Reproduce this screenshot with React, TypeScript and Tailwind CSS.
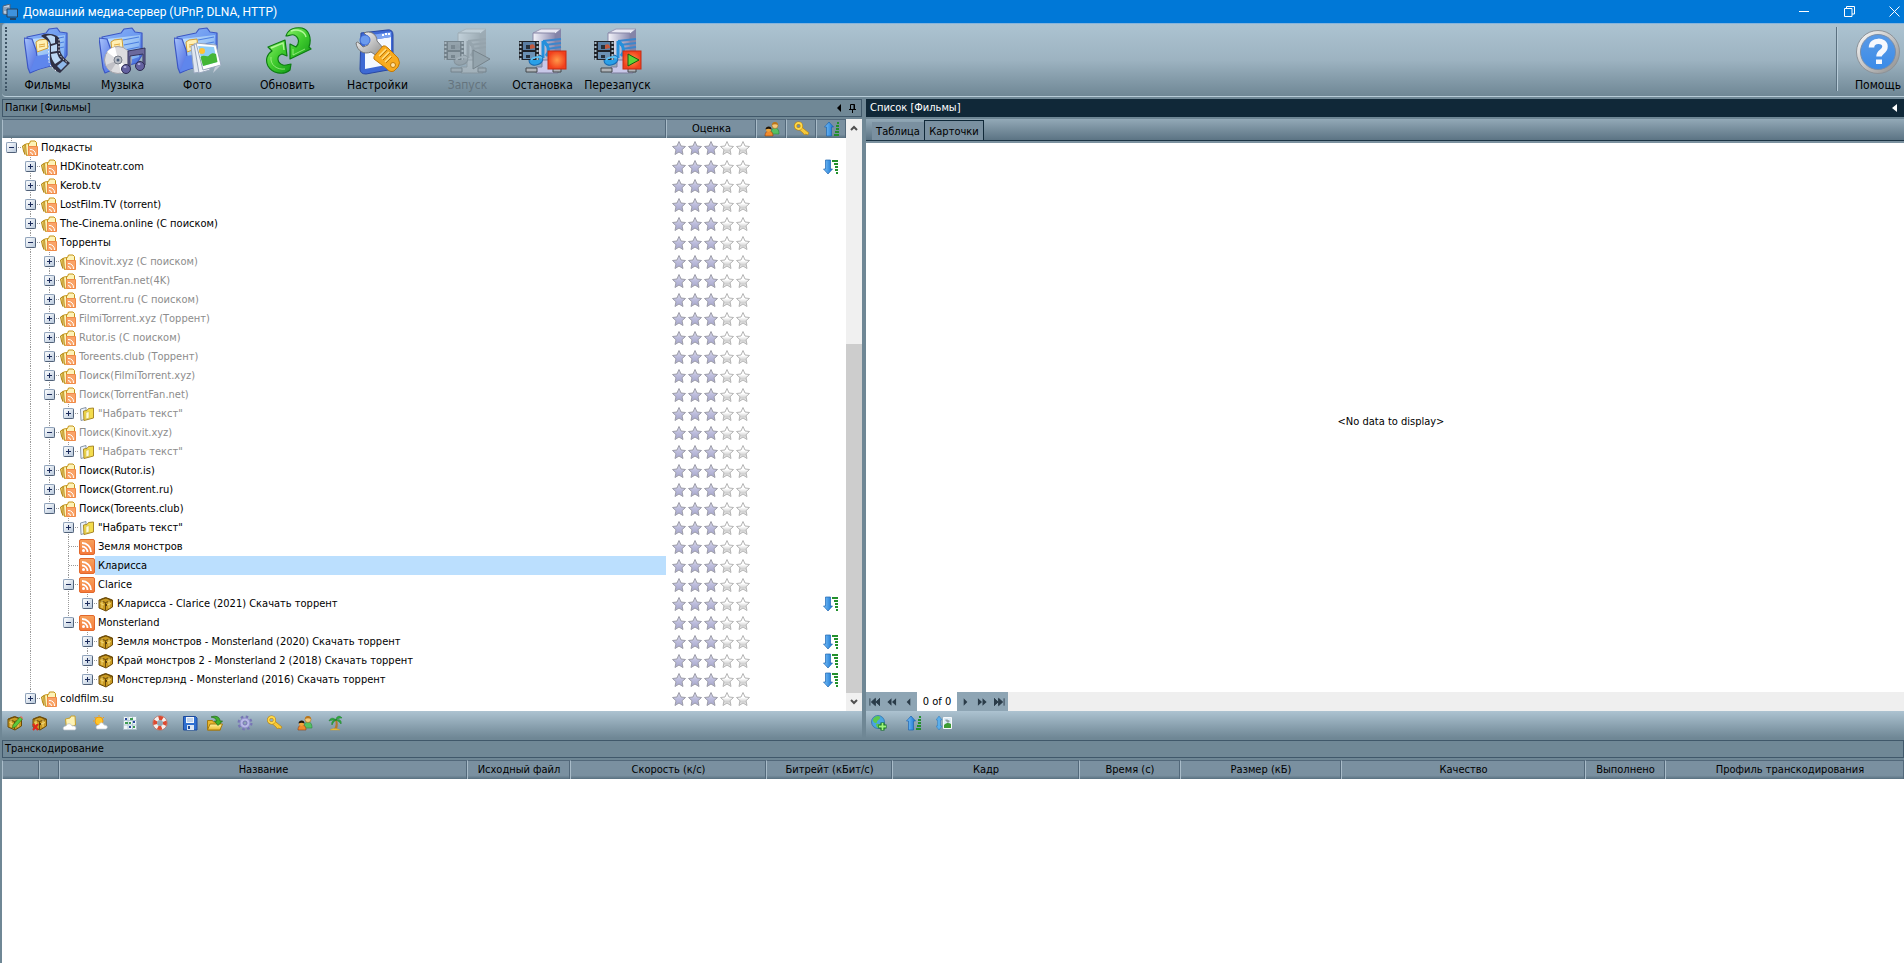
import React from "react";
import clsx from "clsx";

type IconName = "folder" | "pages" | "rss" | "chest";

type Node = {
  depth: number;
  label: string;
  icon?: IconName;
  expander?: "+" | "-";
  muted?: boolean;
  selected?: boolean;
  sorted?: boolean;
};

const nodes: Node[] = [
  { depth: 0, label: "Подкасты", expander: "-" },
  { depth: 1, label: "HDKinoteatr.com", expander: "+", sorted: true },
  { depth: 1, label: "Kerob.tv", expander: "+" },
  { depth: 1, label: "LostFilm.TV (torrent)", expander: "+" },
  { depth: 1, label: "The-Cinema.online (С поиском)", expander: "+" },
  { depth: 1, label: "Торренты", expander: "-" },
  { depth: 2, label: "Kinovit.xyz (С поиском)", expander: "+", muted: true },
  { depth: 2, label: "TorrentFan.net(4K)", expander: "+", muted: true },
  { depth: 2, label: "Gtorrent.ru (С поиском)", expander: "+", muted: true },
  { depth: 2, label: "FilmiTorrent.xyz (Торрент)", expander: "+", muted: true },
  { depth: 2, label: "Rutor.is (С поиском)", expander: "+", muted: true },
  { depth: 2, label: "Toreents.club (Торрент)", expander: "+", muted: true },
  { depth: 2, label: "Поиск(FilmiTorrent.xyz)", expander: "+", muted: true },
  { depth: 2, label: "Поиск(TorrentFan.net)", expander: "-", muted: true },
  { depth: 3, label: '"Набрать текст"', icon: "pages", expander: "+", muted: true },
  { depth: 2, label: "Поиск(Kinovit.xyz)", expander: "-", muted: true },
  { depth: 3, label: '"Набрать текст"', icon: "pages", expander: "+", muted: true },
  { depth: 2, label: "Поиск(Rutor.is)", expander: "+" },
  { depth: 2, label: "Поиск(Gtorrent.ru)", expander: "+" },
  { depth: 2, label: "Поиск(Toreents.club)", expander: "-" },
  { depth: 3, label: '"Набрать текст"', icon: "pages", expander: "+" },
  { depth: 3, label: "Земля монстров", icon: "rss" },
  { depth: 3, label: "Кларисса", icon: "rss", selected: true },
  { depth: 3, label: "Clarice", icon: "rss", expander: "-" },
  { depth: 4, label: "Кларисса - Clarice (2021) Скачать торрент", icon: "chest", expander: "+", sorted: true },
  { depth: 3, label: "Monsterland", icon: "rss", expander: "-" },
  { depth: 4, label: "Земля монстров - Monsterland (2020) Скачать торрент", icon: "chest", expander: "+", sorted: true },
  { depth: 4, label: "Край монстров 2 - Monsterland 2 (2018) Скачать торрент", icon: "chest", expander: "+", sorted: true },
  { depth: 4, label: "Монстерлэнд - Monsterland (2016) Скачать торрент", icon: "chest", expander: "+", sorted: true },
  { depth: 1, label: "coldfilm.su", expander: "+" },
];

// true when a later sibling exists at this depth
const hasNext = (idx: number, depth: number): boolean => {
  const next = nodes.slice(idx + 1).find((node) => node.depth <= depth);
  return next?.depth === depth;
};

const Gradients: React.FC = () => (
  <svg width="0" height="0" className="absolute" aria-hidden="true">
    <defs>
      <linearGradient id="star" x1="0" y1="0" x2="0" y2="1">
        <stop offset="0" stopColor="#dcdcec" />
        <stop offset="0.5" stopColor="#bcbcdc" />
        <stop offset="1" stopColor="#a6a6cc" />
      </linearGradient>
      <linearGradient id="starOff" x1="0" y1="0" x2="0" y2="1">
        <stop offset="0.4" stopColor="#ffffff" />
        <stop offset="0.7" stopColor="#d2d2d2" />
        <stop offset="1" stopColor="#f4f4f4" />
      </linearGradient>
      <linearGradient id="blueFolder" x1="0" y1="0" x2="1" y2="1">
        <stop offset="0" stopColor="#8fb6f8" />
        <stop offset="0.5" stopColor="#6d9bf0" />
        <stop offset="1" stopColor="#3f63d6" />
      </linearGradient>
      <linearGradient id="blueInner" x1="0" y1="0" x2="1" y2="1">
        <stop offset="0" stopColor="#c4e2fc" />
        <stop offset="1" stopColor="#6fa4f0" />
      </linearGradient>
      <linearGradient id="blueFront" x1="0" y1="0" x2="1" y2="1">
        <stop offset="0" stopColor="#a9c4fc" />
        <stop offset="1" stopColor="#3f60dc" />
      </linearGradient>
      <linearGradient id="green" x1="0" y1="0" x2="1" y2="1">
        <stop offset="0" stopColor="#8df06a" />
        <stop offset="0.5" stopColor="#3fcb2d" />
        <stop offset="1" stopColor="#119a17" />
      </linearGradient>
      <linearGradient id="server" x1="0" y1="0" x2="1" y2="0">
        <stop offset="0" stopColor="#f4f4fa" />
        <stop offset="1" stopColor="#8b8bb0" />
      </linearGradient>
      <radialGradient id="red">
        <stop offset="0" stopColor="#ff9a4a" />
        <stop offset="1" stopColor="#f2401c" />
      </radialGradient>
      <linearGradient id="helpBlue" x1="0" y1="0" x2="0" y2="1">
        <stop offset="0" stopColor="#5a9ae6" />
        <stop offset="1" stopColor="#3a8be8" />
      </linearGradient>
      <linearGradient id="silver" x1="0" y1="0" x2="1" y2="1">
        <stop offset="0" stopColor="#ffffff" />
        <stop offset="1" stopColor="#8a8a8a" />
      </linearGradient>
      <linearGradient id="orange" x1="0" y1="0" x2="0" y2="1">
        <stop offset="0" stopColor="#f7a25c" />
        <stop offset="1" stopColor="#f5793a" />
      </linearGradient>
      <linearGradient id="arrowBlue" x1="0" y1="0" x2="1" y2="0">
        <stop offset="0" stopColor="#7cc4fa" />
        <stop offset="1" stopColor="#1672d0" />
      </linearGradient>
      <linearGradient id="gold" x1="0" y1="0" x2="0" y2="1">
        <stop offset="0" stopColor="#fff3a0" />
        <stop offset="1" stopColor="#eab72e" />
      </linearGradient>
    </defs>
  </svg>
);

const Big: React.FC<{ children: React.ReactNode }> = ({ children }) => (
  <svg width="48" height="48" viewBox="0 0 48 48" aria-hidden="true">
    {children}
  </svg>
);

const Small: React.FC<{ children: React.ReactNode }> = ({ children }) => (
  <svg width="16" height="16" viewBox="0 0 16 16" className="shrink-0" aria-hidden="true">
    {children}
  </svg>
);

const BlueFolder: React.FC = () => (
  <g strokeLinejoin="round">
    <path d="M3 10 22 6 25 2 33 1 36 5 43 6 43 28 38 36 8 44Z" fill="url(#blueFolder)" stroke="#3c57c4" strokeWidth="1.2" />
    <path d="M8 12 41 8 40 30 10 40Z" fill="url(#blueInner)" />
    <path d="M24 13 40 10M25 18 40 15M26 23 40 20" stroke="#4c7fe0" strokeWidth="1.2" />
    <path d="m12 15 3-2 8-1 1 9-11 4Z" fill="#fff0b4" stroke="#cf9d34" />
    <path d="m15 18 6-1m-6 3 6-1" stroke="#e0a83c" />
    <path d="M0 11 8 12 12 23 15 42 6 46 4 41Z" fill="url(#blueFront)" stroke="#3c57c4" strokeWidth="1.2" />
    <path d="m6 45 9-3 10-3-1-12-12 2Z" fill="#5f86ec" />
  </g>
);

const MoviesIcon: React.FC = () => (
  <Big>
    <BlueFolder />
    <path d="M17 9c3-3 10-3 16 0 4 3 3 8 3 13 0 5 4 9 10 14l-10 10c-7-3-10-8-10-14V18c0-4-4-5-9-9Z" fill="#2f3044" />
    <path d="M22 9c3-1 6-1 9 1v6l-4 1c-1-4-3-6-5-8ZM27 19l6-2v7l-6 1ZM27 27l6-1c1 3 2 5 4 7l-6 4c-2-3-4-6-4-10Z" fill="#bcd8f4" />
    <path d="m33 39 6-5 4 3-6 6Z" fill="#8fb8ea" />
    <path d="M24.500 17v14c0 6 3 10 8 13M35 12v12c0 5 4 8 9 12" stroke="#eeeef6" strokeDasharray="1.500 2" fill="none" />
  </Big>
);

const MusicIcon: React.FC = () => (
  <Big>
    <BlueFolder />
    <circle cx="19" cy="33" r="13.500" fill="#dcdcdf" stroke="#a5a5ab" />
    <path d="M19 33 8 25a13 13 0 0 1 8-5ZM19 33l11 8a13 13 0 0 1-8 5Z" fill="#fff" />
    <path d="m19 33-12 5a13 13 0 0 0 5 6Z" fill="#c0c0c6" />
    <circle cx="19" cy="33" r="4" fill="#b8bcc4" stroke="#777d88" />
    <circle cx="19" cy="33" r="1.500" fill="#4d5f7a" />
    <path d="M29 24 46 21V38H44V27L31 29V42H29Z" fill="#6b699c" stroke="#35345c" />
    <ellipse cx="27" cy="42" rx="4.500" ry="4.500" fill="#6361a0" stroke="#2d2c50" />
    <ellipse cx="41" cy="39" rx="4.500" ry="4.500" fill="#6361a0" stroke="#2d2c50" />
    <ellipse cx="26" cy="40" rx="1.500" ry="1" fill="#b9b8e2" />
    <ellipse cx="40" cy="37" rx="1.500" ry="1" fill="#b9b8e2" />
  </Big>
);

const PhotoIcon: React.FC = () => (
  <Big>
    <BlueFolder />
    <path d="M17 19 23 17 27 45 20 46Z" fill="#dfe6f0" stroke="#98a6bc" />
    <path d="M20 17 32 17 36 43 25 46Z" fill="#eef2f8" stroke="#98a6bc" />
    <path d="M22 16 42 18 47 38 29 43Z" fill="#fff" stroke="#98a6bc" />
    <path d="M24 19 40 20 43 35 29 39Z" fill="#8fcdf6" />
    <path d="M26.500 30c4-3 7 1 9-2 2-2 4-2 6.500-1l1.500 8L29 39Z" fill="#44b636" />
    <circle cx="28" cy="24" r="3" fill="#ffc233" />
    <path d="M39 46 47 38 41 40Z" fill="#c4ccd8" />
  </Big>
);

const RefreshIcon: React.FC = () => (
  <Big>
    <g stroke="#0d7d12" strokeWidth="1.200" strokeLinejoin="round">
      <path d="M4 20 21 13 23 29 18 27C12 29 13 36 19 38 22 39 25 37 27 37L26 43C19 49 8 46 4 39 1 33 3 27 8 24Z" fill="url(#green)" />
      <path d="M22 9C24 2 31 0 38 1 45 3 48 11 45 20L47 22 26 32 26 17 32 20C36 16 35 10 30 8 27 7 25 9 22 9Z" fill="url(#green)" />
    </g>
    <path d="M7 21 19 16 20 23M27 4C34 1 41 5 42 10" stroke="#c8ffae" strokeWidth="1.400" fill="none" opacity="0.800" />
    <path d="M7 30C6 38 13 43 21 42M29 22 29 28 41 22" stroke="#b6f89a" fill="none" opacity="0.700" />
  </Big>
);

const SettingsIcon: React.FC = () => (
  <Big>
    <path d="M7 6 33 3Q39 2 39 8V39Q39 42 34 43L12 47Q6 47 6 42Z" fill="#3e69d4" stroke="#2847a4" />
    <path d="M11 14 37 10V37L11 42Z" fill="#f4f8ff" />
    <path d="M11 9 37 5V10L11 14Z" fill="#7da4f2" />
    <path d="m28 8 2 0m1-1 2 0m1 0 2 0" stroke="#fff" strokeWidth="2" />
    <path d="M2 16Q3 14 5 16L9 20 14 18 15 11 10 6C16 3 23 7 23 14L30 22 23 29 17 25C10 28 3 24 2 16Z" fill="url(#silver)" stroke="#777" />
    <circle cx="11" cy="13" r="5" fill="#6b9bee" stroke="#3e69d4" />
    <path d="M22 27 29 19Q31 18 34 21L44 31Q47 36 44 40L40 44Q36 46 32 41L20 32Q19 30 22 27Z" fill="#f8ab1f" stroke="#c27a08" />
    <path d="m25 29 7-7M28 32l7-7M31 35l6-6" stroke="#ffdf82" strokeWidth="1.500" />
    <path d="m26 30 7-7M29 33l7-7M32 36l6-6" stroke="#b8770c" />
    <circle cx="39" cy="38" r="2.500" fill="#ffe2a2" stroke="#c27a08" />
  </Big>
);

const ServerBase: React.FC = () => (
  <g>
    <path d="M14 6 22 2H42L36 7Z" fill="#e9e9f4" stroke="#9a9ab6" />
    <path d="M14 6H36V38L14 36Z" fill="url(#server)" stroke="#8888a8" />
    <path d="M36 7 42 2V33L36 38Z" fill="#8484a8" />
    <path d="M24 14 42 12M26 18 42 16M28 22 42 20" stroke="#3c86cc" strokeWidth="2" />
    <path d="M23 33H33V40H39V46H17V40H23Z" fill="#c8c8e8" stroke="#7c7c9c" />
    <path d="M7 41H18V45H7ZM34 41H42V45H34Z" fill="#b0b4b8" stroke="#45484c" />
    <path d="M24 14V31M24 14C30 18 31 25 27 29" stroke="#2490dc" strokeWidth="3" fill="none" />
    <ellipse cx="17" cy="33" rx="7" ry="5" fill="#29a0e8" stroke="#1768b0" transform="rotate(-15 17 33)" />
    <path d="M0 14H20V33H0Z" fill="#1f2228" />
    <path d="M1.500 15V33M18.500 15V33" stroke="#a9bcc8" strokeWidth="2" strokeDasharray="2 2" />
    <path d="M4 15H16V23H4Z" fill="#5a7ea4" />
    <path d="M4 25H16V32H4Z" fill="#6b91b4" />
    <path d="M7 18h4v4H7ZM7 28h4v3H7Z" fill="#26303c" />
    <path d="M11 18c3-2 5 0 5 3l-5 1Z" fill="#c4583c" />
    <path d="M12 33c2-3 8-4 11-2" stroke="#5cc0f4" strokeWidth="2" fill="none" />
  </g>
);

const StartIcon: React.FC = () => (
  <Big>
    <g className="opacity-35 grayscale">
      <ServerBase />
    </g>
    <path d="m29 23 17 9-17 10Z" fill="#93a3ac" stroke="#77848c" />
  </Big>
);

const StopIcon: React.FC = () => (
  <Big>
    <ServerBase />
    <rect x="29" y="24" width="18" height="18" fill="url(#red)" stroke="#c42c14" />
  </Big>
);

const RestartIcon: React.FC = () => (
  <Big>
    <ServerBase />
    <rect x="29" y="24" width="18" height="18" fill="url(#red)" stroke="#c42c14" />
    <path d="m34 27 11 6-11 6Z" fill="#5fd636" stroke="#145c10" />
  </Big>
);

const HelpIcon: React.FC = () => (
  <Big>
    <circle cx="24" cy="25" r="21.500" fill="url(#silver)" stroke="#8c9298" />
    <circle cx="24" cy="25" r="17.500" fill="url(#helpBlue)" stroke="#7a8ea8" />
    <path d="M17.500 20.500C17.500 12.500 31 12.500 31 19.500 31 25 25 24.500 25 29.500" stroke="#f6f8fd" strokeWidth="5.500" fill="none" />
    <path d="M22 32.500h6v4.500h-6Z" fill="#f6f8fd" />
  </Big>
);

const Arrow: React.FC<{ up?: boolean }> = ({ up = false }) => (
  <Small>
    <path
      d={up ? "M5 1 9.500 6H7.500V15H2.500V6H.5Z" : "M5 15 9.500 10H7.500V1H2.500V10H.5Z"}
      fill="url(#arrowBlue)"
      stroke="#1c64b0"
      strokeWidth="0.700"
    />
    <path
      d={up ? "M13 2h2M12 5h3M12 8h3M11 11h4M10 14h5" : "M9 2h6M11 5h4M12 8h3M12 11h3M13 14h2"}
      stroke="#23902c"
      strokeWidth="2"
    />
  </Small>
);

const UsersIcon: React.FC = () => (
  <Small>
    <path d="M7 13c0-5 2-6 4-6s4 1 4 6Z" fill="#55c063" stroke="#2b8a3a" strokeWidth="0.600" />
    <circle cx="11" cy="4.500" r="3" fill="#f5c87a" stroke="#a56f1c" strokeWidth="0.600" />
    <path d="M8 4c0-4 6-4 6 0-2-1-4-1-6 0Z" fill="#b8741a" />
    <path d="M1 15c0-4 2-5 4-5s4 1 4 5Z" fill="#f08a2c" stroke="#8f3f10" strokeWidth="0.600" />
    <circle cx="4.500" cy="8.500" r="2.500" fill="#f0a63c" />
    <path d="M1.500 8.500c0-4 6.500-4 6 0-2-1-4-1-6 0Z" fill="#1d1408" />
  </Small>
);

const KeyIcon: React.FC = () => (
  <Small>
    <path d="M7 5.500 15 12l-1.500 2-2-1-1 1-1.500-2L5 8.500Z" fill="#f6c838" stroke="#b8820f" strokeWidth="0.700" />
    <circle cx="4.500" cy="5" r="3" fill="none" stroke="#b8820f" strokeWidth="3" />
    <circle cx="4.500" cy="5" r="3" fill="none" stroke="#ffd94a" strokeWidth="1.800" />
  </Small>
);

const ChestShape: React.FC = () => (
  <g strokeLinejoin="round">
    <path d="M1 4 7.500 1.500 14.500 4V11L8 15 1 12Z" fill="#c99a22" stroke="#6b4a08" />
    <path d="M1.500 4.500 7.500 6.500 14 4.500M7.500 6.500V14.500M3 3.500 8 2l5 2" stroke="#6b4a08" fill="none" />
    <path d="M2.500 7.500 6 9M9 9l4-1.500M4 4.500V12M11 5V12" stroke="#f3d774" fill="none" />
    <path d="M7 8h2v2H7Z" fill="#5a3e08" />
  </g>
);

const ChestIcon: React.FC = () => (
  <Small>
    <ChestShape />
  </Small>
);

const FolderIcon: React.FC = () => (
  <Small>
    <path d="M.5 6 3 4.500V14.500L1.500 11Z" fill="#f0d870" stroke="#b08414" />
    <path d="M3.500 4 7.500 3.500 8.500 1H13L14.500 2.500V13L4.500 15.500Z" fill="#fdf3b8" stroke="#c49418" />
    <path d="M6.500 3.500V13" stroke="#c49418" />
    <path d="M6.500 6.500h9v9h-9Z" fill="#f9a468" stroke="#f08a48" />
    <path d="M8 9.500a5 5 0 0 1 5.500 5.500M8 12.500a2.500 2.500 0 0 1 2.500 2.500" stroke="#fff" fill="none" />
  </Small>
);

const PagesIcon: React.FC = () => (
  <Small>
    <path d="M1.500 3 7 1.500V13L2 14.500Z" fill="#edf3fa" stroke="#8896a8" />
    <path d="M4.500 5 8 4.500 9.500 2.500 14.500 2V12L5 14.500Z" fill="#f3dc4e" stroke="#a8882a" />
    <path d="M7 6.500l3-1V12L7 13Z" fill="#fffbd8" stroke="#c4ac3c" strokeWidth="0.500" />
  </Small>
);

const RssIcon: React.FC = () => (
  <Small>
    <rect x="0.500" y="0.500" width="15" height="15" rx="1.500" fill="url(#orange)" stroke="#e2682c" />
    <circle cx="4.500" cy="11.500" r="1.500" fill="#fff" />
    <path d="M3 7.500a5.500 5.500 0 0 1 5.500 5.500M3 4a9 9 0 0 1 9 9" stroke="#fff" strokeWidth="1.800" fill="none" />
  </Small>
);

const treeIcons: Record<IconName, React.ReactNode> = {
  folder: <FolderIcon />,
  pages: <PagesIcon />,
  rss: <RssIcon />,
  chest: <ChestIcon />,
};

const leftTools: { title: string; spaced?: boolean; icon: React.ReactNode }[] = [
  {
    title: "Изменить",
    icon: (
      <Small>
        <ChestShape />
        <path d="m6 10 7-8 2.500 2-7 8-3 1Z" fill="#5cc83c" stroke="#2c7a1a" strokeWidth="0.600" />
        <path d="m13 2 1-1 2 2-.5 1Z" fill="#e86a5a" />
      </Small>
    ),
  },
  {
    title: "Удалить",
    icon: (
      <Small>
        <ChestShape />
        <path d="m1 9 5 6m0-6-5 6" stroke="#e0281c" strokeWidth="2" />
      </Small>
    ),
  },
  {
    title: "Папка",
    spaced: true,
    icon: (
      <Small>
        <path d="M3.500 4 8 3l1-2h4l.5 9-9 3Z" fill="#fdf2b4" stroke="#c8a02c" />
        <path d="M2 15c-2-2 0-4 2-4 1-3 5-3 6 0 4-1 5 3 3 4Z" fill="#fff" stroke="#b4bcc4" strokeWidth="0.700" />
      </Small>
    ),
  },
  {
    title: "Погода",
    spaced: true,
    icon: (
      <Small>
        <circle cx="7" cy="6" r="4" fill="#ffc629" stroke="#f29a0c" />
        <path d="M7 0v1M1 6h1M2.500 2l1 1M12 2l-1 1" stroke="#f29a0c" />
        <path d="M5 14c-2-2 0-4 2-4 1-3 4-3 5 0 4 0 4 3 2 4Z" fill="#fff" stroke="#c4ccd4" strokeWidth="0.700" />
      </Small>
    ),
  },
  {
    title: "Сетка",
    spaced: true,
    icon: (
      <Small>
        <path d="M1.500 1.500h13v13h-13Z" fill="#f0f6f8" stroke="#a8bcc8" />
        <path d="M2 5.500h12M2 10h12M6 2v12M10.500 2v12" stroke="#b0c8d4" />
        <path d="M3 3h2v2H3ZM11 6h2v2h-2ZM7 11h2v2H7Z" fill="#2c4a9c" />
        <path d="M8 3h3v2H8ZM3 7h3v2H3ZM11 11h2v2h-2ZM7 7h2v2H7Z" fill="#3f9c54" />
      </Small>
    ),
  },
  {
    title: "Помощь",
    spaced: true,
    icon: (
      <Small>
        <circle cx="8" cy="8" r="5" fill="none" stroke="#f4f0ee" strokeWidth="4" />
        <circle cx="8" cy="8" r="5" fill="none" stroke="#dc4a30" strokeWidth="4" strokeDasharray="3.930 3.930" transform="rotate(-22 8 8)" />
        <circle cx="8" cy="8" r="7.200" fill="none" stroke="#c4553f" strokeWidth="0.500" />
      </Small>
    ),
  },
  {
    title: "Сохранить",
    spaced: true,
    icon: (
      <Small>
        <path d="M1.500 1.500h12l1.500 1.500v12H1.500Z" fill="#2f6fd0" stroke="#1c4a9c" />
        <path d="M4 2h8v6H4Z" fill="#f4f8fc" />
        <path d="M5 4h6M5 6h6" stroke="#8fb0dc" />
        <path d="M5 10h7v5H5Z" fill="#dce6f2" />
        <path d="M6 11h2v3H6Z" fill="#1c4a9c" />
      </Small>
    ),
  },
  {
    title: "Загрузить",
    icon: (
      <Small>
        <path d="M.5 5.500h5l1 1.500h7v8H.5Z" fill="#eab72e" stroke="#a47a10" />
        <path d="m.5 15 2.500-6h12.500L13 15Z" fill="url(#gold)" stroke="#a47a10" />
        <path d="M4 2c5-2 9 0 9 4h2.500L11 10.500 7.500 6H10C9 3.500 7 2.500 4 2Z" fill="#3fae2c" stroke="#1c6c12" strokeWidth="0.700" />
      </Small>
    ),
  },
  {
    title: "Параметры",
    spaced: true,
    icon: (
      <Small>
        <circle cx="8" cy="8" r="6" fill="none" stroke="#7776b4" strokeWidth="3" strokeDasharray="2.360 2.350" />
        <circle cx="8" cy="8" r="5" fill="#b9b8e6" stroke="#8f8ecb" />
        <circle cx="8" cy="8" r="2" fill="#8fa5b4" stroke="#7776b4" />
      </Small>
    ),
  },
  { title: "Доступ", spaced: true, icon: <KeyIcon /> },
  { title: "Пользователи", spaced: true, icon: <UsersIcon /> },
  {
    title: "Отдых",
    spaced: true,
    icon: (
      <Small>
        <path d="M8 5c1 3 1 6-1 9h3c1-3 1-6 0-9Z" fill="#b4782c" />
        <path d="M9 5C6 2 3 3 2 6c2-1 4-1 7-1ZM9 5c0-4 4-5 6-2-2 0-4 0-6 2ZM9 5c3-1 6 0 5 4-1-2-3-3-5-4ZM9 5C6 5 4 7 5 10c1-2 2-4 4-5Z" fill="#2fae3c" stroke="#187a24" strokeWidth="0.500" />
        <path d="M3 15c2-2 7-2 10 0Z" fill="#f0c83c" stroke="#c4982c" strokeWidth="0.500" />
      </Small>
    ),
  },
];

const Star: React.FC<{ on: boolean }> = ({ on }) => (
  <svg width="16" height="16" viewBox="0 0 16 16" aria-hidden="true">
    <path
      d="M8 1.500 10 6l4.500.5-3.500 3.200 1 4.800-4-2.500-4 2.500 1-4.800L1.500 6.500 6 6Z"
      fill={on ? "url(#star)" : "url(#starOff)"}
      stroke={on ? "#9c9ca8" : "#b4b4b4"}
      strokeLinejoin="round"
    />
  </svg>
);

const Guide: React.FC<{ top?: boolean; bottom?: boolean; side?: boolean }> = ({ top, bottom, side }) => (
  <svg width="19" height="19" viewBox="0 0 19 19" className="shrink-0" aria-hidden="true">
    <g stroke="#9a9a9a" strokeDasharray="1 1">
      {top && <path d="M9.500 0V9" />}
      {bottom && <path d="M9.500 10V19" />}
      {side && <path d="M10 9.500H19" />}
    </g>
  </svg>
);

const Expander: React.FC<{ sign: "+" | "-" }> = ({ sign }) => (
  <button
    type="button"
    aria-label={sign === "+" ? "Развернуть" : "Свернуть"}
    className="absolute left-1 top-1 flex size-[11px] items-center justify-center rounded-[2px] border border-[#8fa2ba] border-b-[#4f6078] border-r-[#4f6078] bg-linear-to-br from-white to-[#b9c9dc]"
  >
    <svg width="7" height="7" viewBox="0 0 7 7" aria-hidden="true">
      <path d={sign === "+" ? "M1 3.500H6M3.500 1V6" : "M1 3.500H6"} stroke="#1c2c5c" />
    </svg>
  </button>
);

const TreeRow: React.FC<{ node: Node; idx: number }> = ({ node, idx }) => {
  const { depth, label, icon = "folder", expander, muted, selected, sorted } = node;

  return (
    <tr className="h-[19px]">
      <td className="p-0">
        <div className="flex h-[19px] items-center">
          {Array.from({ length: depth }, (_, level) => (
            <Guide key={level} top={hasNext(idx, level)} bottom={hasNext(idx, level)} />
          ))}
          <span className="relative flex shrink-0">
            <Guide top bottom={hasNext(idx, depth)} side />
            {expander && <Expander sign={expander} />}
          </span>
          <span className="ml-px">{treeIcons[icon]}</span>
          <span
            className={clsx(
              "flex h-[19px] flex-1 items-center pl-[3px] whitespace-nowrap",
              muted && "text-[#8c8c8c]",
              selected && "bg-[#bbdffe]"
            )}
          >
            {label}
          </span>
        </div>
      </td>
      <td className="p-0">
        <div className="flex pt-px pl-[5px]" role="img" aria-label="3 из 5">
          {[1, 2, 3, 4, 5].map((n) => (
            <Star key={n} on={n <= 3} />
          ))}
        </div>
      </td>
      <td />
      <td />
      <td className="p-0">
        {sorted && (
          <div className="flex justify-center">
            <Arrow />
          </div>
        )}
      </td>
    </tr>
  );
};

const HeaderCell: React.FC<{ children?: React.ReactNode; className?: string }> = ({ children, className }) => (
  <th
    className={clsx(
      "h-[19px] border-t border-l border-t-[#52687a] border-l-[#a9bcc9] bg-linear-to-b from-[#7a90a0] from-80% to-[#587080] p-0 font-normal whitespace-nowrap shadow-[inset_-1px_0_0_#52687a]",
      className
    )}
  >
    <div className="flex h-[18px] items-center justify-center">{children}</div>
  </th>
);

const ToolButton: React.FC<{
  label: string;
  icon: React.ReactNode;
  disabled?: boolean;
  className?: string;
}> = ({ label, icon, disabled, className = "w-[75px]" }) => (
  <button
    type="button"
    disabled={disabled}
    className={clsx("flex shrink-0 flex-col items-center text-xs disabled:text-[#65747e]", className)}
  >
    {icon}
    <span className="mt-px h-[18px] leading-[18px]">{label}</span>
  </button>
);

const navPaths = {
  first: "M1 1V9M7 1 2.500 5 7 9ZM12 1 7.500 5 12 9Z",
  prevPage: "M6 1 1.500 5 6 9ZM11 1 6.500 5 11 9Z",
  prev: "M8 1 4 5 8 9Z",
  next: "M4 1 8 5 4 9Z",
  nextPage: "M1 1 5.500 5 1 9ZM6 1 10.500 5 6 9Z",
  last: "M0 1 4.500 5 0 9ZM5 1 9.500 5 5 9ZM11 1V9",
};

const NavButton: React.FC<{ name: keyof typeof navPaths; title: string }> = ({ name, title }) => (
  <button type="button" title={title} className="flex w-[17px] items-center justify-center bg-[#8ea5b4]">
    <svg width="11" height="10" viewBox="0 0 12 10" aria-hidden="true">
      <path d={navPaths[name]} fill="#2a3b48" stroke="#2a3b48" strokeWidth={name === "first" || name === "last" ? 1 : 0} />
    </svg>
  </button>
);

const Caption: React.FC<{ children?: React.ReactNode; title: string }> = ({ children, title }) => (
  <div className="flex h-[18px] items-center border border-[#40586a] bg-[#708896] pr-[3px] pl-[2px]">
    <h2 className="flex-1">{title}</h2>
    {children}
  </div>
);

const transcodeColumns = [
  { width: "w-[37px]", label: "" },
  { width: "w-[20px]", label: "" },
  { width: "w-[408px]", label: "Название" },
  { width: "w-[103px]", label: "Исходный файл" },
  { width: "w-[196px]", label: "Скорость (к/с)" },
  { width: "w-[126px]", label: "Битрейт (кБит/с)" },
  { width: "w-[187px]", label: "Кадр" },
  { width: "w-[101px]", label: "Время (с)" },
  { width: "w-[161px]", label: "Размер (кБ)" },
  { width: "w-[244px]", label: "Качество" },
  { width: "w-[80px]", label: "Выполнено" },
  { width: "pl-[10px]", label: "Профиль транскодирования" },
];

const strip = "flex h-[27px] items-center bg-linear-to-b from-[#adc3d1] to-[#6f8795] pb-[3px]";

const App: React.FC = () => (
  <div className="flex min-h-screen flex-col overflow-hidden bg-[#6f8795] font-['DejaVu_Sans_Condensed','DejaVu_Sans',sans-serif] text-[11px] leading-[14px] text-black">
    <Gradients />

    <header className="flex h-[23px] items-center bg-[#0078d7] pl-[2px] font-[Roboto,'Open_Sans',sans-serif] text-xs text-white">
      <Small>
        <path d="M1 2 8 0v11L1 10Z" fill="#b9cce0" stroke="#48617c" />
        <path d="M2 4h5M2 6h5" stroke="#5f7c9c" />
        <path d="M5 5h10.500v8H5Z" fill="#3f92dc" stroke="#24405e" />
        <path d="M8 15h6" stroke="#24405e" strokeWidth="2" />
      </Small>
      <h1 className="flex-1 pl-[5px]">Домашний медиа-сервер (UPnP, DLNA, HTTP)</h1>
      <div className="flex gap-[26px]">
        <button type="button" aria-label="Свернуть" className="flex w-[19px] justify-center">
          <svg width="11" height="11" viewBox="0 0 11 11" stroke="white" aria-hidden="true">
            <path d="M0 5.500H10" />
          </svg>
        </button>
        <button type="button" aria-label="Восстановить" className="flex w-[19px] justify-center">
          <svg width="11" height="11" viewBox="0 0 11 11" stroke="white" fill="none" aria-hidden="true">
            <path d="M.5 2.500h7.500v8H.5ZM2.500 2.500V.5h8v7.500H8" />
          </svg>
        </button>
        <button type="button" aria-label="Закрыть" className="flex w-[19px] justify-center">
          <svg width="11" height="11" viewBox="0 0 11 11" stroke="white" aria-hidden="true">
            <path d="m.5.5 10 10m0-10-10 10" />
          </svg>
        </button>
      </div>
    </header>

    <nav className="ml-[2px] flex h-[74px] rounded-l-sm border-t border-b border-t-[#86b4dc] border-b-[#b8ccd8] bg-linear-to-b from-[#acc3d1] via-[#9db3c1] via-50% to-[#6f8795] pt-[3px] pl-[3px]">
      <div className="mr-[3px] h-[64px] w-[2px] border-l-2 border-dotted border-[#3f5566]" />
      <ToolButton label="Фильмы" icon={<MoviesIcon />} />
      <ToolButton label="Музыка" icon={<MusicIcon />} />
      <ToolButton label="Фото" icon={<PhotoIcon />} />
      <ToolButton label="Обновить" icon={<RefreshIcon />} className="ml-[15px] w-[75px]" />
      <ToolButton label="Настройки" icon={<SettingsIcon />} className="ml-[15px] w-[75px]" />
      <ToolButton label="Запуск" icon={<StartIcon />} disabled className="ml-[15px] w-[75px]" />
      <ToolButton label="Остановка" icon={<StopIcon />} />
      <ToolButton label="Перезапуск" icon={<RestartIcon />} />
      <div className="ml-auto h-[64px] w-[2px] border-r border-l border-r-[#b8ccd8] border-l-[#5a7080]" />
      <ToolButton label="Помощь" icon={<HelpIcon />} className="ml-[14px] w-[52px]" />
    </nav>

    <div className="mt-[2px] flex">
      <section className="flex w-[862px] shrink-0 flex-col pl-[2px]">
        <Caption title="Папки [Фильмы]">
          <svg width="22" height="12" viewBox="0 0 22 12" aria-hidden="true">
            <path d="M5 2V10L1 6Z" />
            <path d="M14.500 2.500h4v5h-4ZM13 7.500h7M16.500 7.500V11M18 2.500v5" fill="none" stroke="black" />
          </svg>
        </Caption>
        <div className="mt-[2px] flex bg-white">
          <div className="flex-1 pb-[3px]">
            <table className="w-full table-fixed border-separate border-spacing-0">
              <thead>
                <tr>
                  <HeaderCell />
                  <HeaderCell className="w-[90px]">Оценка</HeaderCell>
                  <HeaderCell className="w-[30px]">
                    <UsersIcon />
                  </HeaderCell>
                  <HeaderCell className="w-[30px]">
                    <KeyIcon />
                  </HeaderCell>
                  <HeaderCell className="w-[30px]">
                    <Arrow up />
                  </HeaderCell>
                </tr>
              </thead>
              <tbody>
                {nodes.map((node, idx) => (
                  <TreeRow key={idx} node={node} idx={idx} />
                ))}
              </tbody>
            </table>
          </div>
          <div className="flex w-4 flex-col bg-[#f0f0f0]">
            <button type="button" aria-label="Вверх" className="flex h-[18px] items-center justify-center">
              <svg width="8" height="6" viewBox="0 0 8 6" fill="none" stroke="#505050" strokeWidth="2" aria-hidden="true">
                <path d="m1 5 3-3 3 3" />
              </svg>
            </button>
            <div className="flex-1" />
            <div className="h-[349px] bg-[#cdcdcd]" />
            <button type="button" aria-label="Вниз" className="flex h-[18px] items-center justify-center">
              <svg width="8" height="6" viewBox="0 0 8 6" fill="none" stroke="#505050" strokeWidth="2" aria-hidden="true">
                <path d="m1 1 3 3 3-3" />
              </svg>
            </button>
          </div>
        </div>
        <div className={strip}>
          {leftTools.map(({ title, spaced, icon }) => (
            <button
              key={title}
              type="button"
              title={title}
              className={clsx("flex w-[25px] justify-center", spaced && "ml-[5px]")}
            >
              {icon}
            </button>
          ))}
        </div>
      </section>

      <section className="ml-1 flex flex-1 flex-col">
        <div className="flex h-[18px] items-center bg-[#102838] pr-[7px] pl-1 text-white">
          <h2 className="flex-1">Список [Фильмы]</h2>
          <svg width="5" height="8" viewBox="0 0 5 8" aria-hidden="true">
            <path d="M5 0V8L0 4Z" fill="white" />
          </svg>
        </div>
        <div className="mt-[2px] h-6 border-b-2 border-[#7b919f]">
          <div role="tablist" className="flex h-[22px] items-end border-b border-[#1c3444] bg-linear-to-b from-[#93a9b7] to-[#5c7484] pl-[6px]">
            <button type="button" role="tab" aria-selected="false" className="h-[18px] w-[52px] bg-[#7a90a0] pt-[2px]">
              Таблица
            </button>
            <button
              type="button"
              role="tab"
              aria-selected="true"
              className="h-5 w-[60px] border border-b-0 border-[#102838] bg-[#7a90a0] pt-[2px]"
            >
              Карточки
            </button>
          </div>
        </div>
        <div className="flex flex-1 items-center justify-center bg-white pt-2 pl-3">&lt;No data to display&gt;</div>
        <div className="flex h-[19px] bg-[#efefef]">
          <NavButton name="first" title="В начало" />
          <NavButton name="prevPage" title="Страница назад" />
          <NavButton name="prev" title="Назад" />
          <span className="flex w-10 items-center justify-center bg-white">0 of 0</span>
          <NavButton name="next" title="Вперёд" />
          <NavButton name="nextPage" title="Страница вперёд" />
          <NavButton name="last" title="В конец" />
        </div>
        <div className={strip}>
          <button type="button" title="Добавить" className="flex w-[25px] justify-center">
            <Small>
              <circle cx="7" cy="7" r="6.500" fill="#4aa4e0" stroke="#2a6ca4" strokeWidth="0.700" />
              <path d="M2 4c2-3 6-4 7-2s-3 3-3 5-3 1-4-1ZM5 9c3-1 5 1 3 4-2 0-3-2-3-4Z" fill="#5cc84c" />
              <path d="M11.500 7.500v8M7.500 11.500h8" stroke="#11701a" strokeWidth="4" />
              <path d="M11.500 8v7M8 11.500h7" stroke="#9cf47c" strokeWidth="1.800" />
            </Small>
          </button>
          <button type="button" title="Сортировка" className="ml-[10px] flex w-[25px] justify-center">
            <Arrow up />
          </button>
          <button type="button" title="Обложки" className="ml-[5px] flex w-[25px] justify-center">
            <Small>
              <path d="M3 1 6 5H4.500v6H6L3 15 0 11h1.500V5H0Z" fill="#5aaeea" stroke="#2c78bc" strokeWidth="0.500" />
              <path d="M7.500 2.500h8v11h-8Z" fill="#dcecf6" stroke="#f6f8fa" />
              <path d="M8 10c3-3 5-2 7-1v4H8Z" fill="#3f9c34" />
              <path d="M9 5c2-1 3 0 5 1l-2 2Z" fill="#8f9ca4" />
            </Small>
          </button>
        </div>
      </section>
    </div>

    <section className="mt-[2px] flex flex-1 flex-col pl-[2px]">
      <Caption title="Транскодирование" />
      <div className="mt-[2px] flex-1 bg-white">
        <table className="w-full table-fixed border-separate border-spacing-0">
          <thead>
            <tr>
              {transcodeColumns.map(({ width, label }, idx) => (
                <HeaderCell key={idx} className={width}>
                  {label}
                </HeaderCell>
              ))}
            </tr>
          </thead>
        </table>
      </div>
    </section>
  </div>
);

export default App;
